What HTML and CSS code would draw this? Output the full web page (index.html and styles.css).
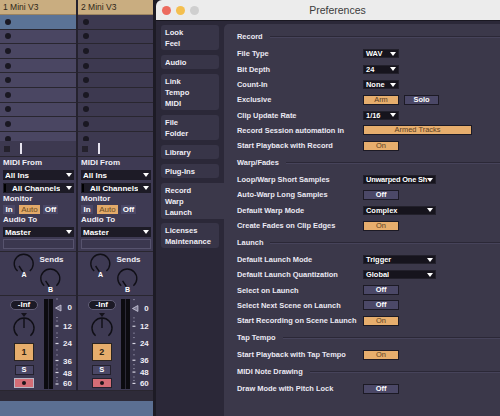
FILE: index.html
```html
<!DOCTYPE html>
<html lang="en">
<head>
    <meta charset="UTF-8">
    <meta name="viewport" content="width=device-width, initial-scale=1.0">
    <title>Preferences</title>
    <link rel="stylesheet" href="styles.css">
</head>
<body>
<div class="screen">
    <div class="left">
        <div class="tracks">
            <div class="track sel">
                <div class="track-head">1 Mini V3</div>
                <div class="slots">
                    <div class="slot active"><span class="dot"></span></div>
                    <div class="slot"><span class="dot"></span></div>
                    <div class="slot"><span class="dot"></span></div>
                    <div class="slot"><span class="dot"></span></div>
                    <div class="slot"><span class="dot"></span></div>
                    <div class="slot"><span class="dot"></span></div>
                    <div class="slot"><span class="dot"></span></div>
                    <div class="slot"><span class="dot"></span></div>
                    <div class="slot"><span class="dot"></span></div>
                </div>
                <div class="stop-row"><span class="stop"></span><span class="bar"></span></div>
                <div class="io">
                    <div class="lbl">MIDI From</div>
                    <div class="drop"><span>All Ins</span><i class="arr"></i></div>
                    <div class="drop chan"><span><b class="tick"></b>All Channels</span><i class="arr"></i></div>
                    <div class="lbl">Monitor</div>
                    <div class="mon">
                        <span class="mb m-in">In</span>
                        <span class="mb m-auto">Auto</span>
                        <span class="mb m-off">Off</span>
                    </div>
                    <div class="lbl">Audio To</div>
                    <div class="drop"><span>Master</span><i class="arr"></i></div>
                    <div class="blank"></div>
                </div>
                <div class="sends">
                    <svg width="76" height="44" viewBox="0 0 76 44">
                        <path d="M17.6 19 A9.5 9.5 0 1 1 29.8 19" class="knob"/>
                        <line x1="19" x2="22.7" y1="14" y2="19.7" class="knob"/>
                        <text x="24" y="24.5" class="kl">A</text>
                        <text x="39.5" y="10" class="kt">Sends</text>
                        <path d="M44.2 33.8 A9.5 9.5 0 1 1 56.4 33.8" class="knob"/>
                        <line x1="45.6" x2="49.3" y1="28.8" y2="34.5" class="knob"/>
                        <text x="50.5" y="39.5" class="kl">B</text>
                    </svg>
                </div>
                <div class="mixer">
                    <div class="mix-ctl">
                        <div class="pill">-Inf</div>
                        <svg class="pan" width="24" height="25" viewBox="0 0 24 25">
                            <polygon points="9,0 15,0 12,4" fill="#15131c"/>
                            <path d="M5.6 22.7 A10 10 0 1 1 18.4 22.7" class="knob"/>
                            <line x1="12" x2="12" y1="5" y2="15" class="knob"/>
                        </svg>
                        <div class="num">1</div>
                        <div class="solo">S</div>
                        <div class="rec"><i></i></div>
                    </div>
                    <div class="meter"><i></i><i></i></div>
                    <svg class="scale" width="22" height="94" viewBox="0 0 22 94">
                        <g class="minor">
                            <line x1="2" x2="4" y1="3" y2="3"/>
                            <line x1="2" x2="4" y1="21.5" y2="21.5"/>
                            <line x1="2" x2="4" y1="25" y2="25"/>
                            <line x1="2" x2="4" y1="37" y2="37"/>
                            <line x1="2" x2="4" y1="41.5" y2="41.5"/>
                            <line x1="2" x2="4" y1="54" y2="54"/>
                            <line x1="2" x2="4" y1="59" y2="59"/>
                            <line x1="2" x2="4" y1="69" y2="69"/>
                            <line x1="2" x2="4" y1="73" y2="73"/>
                            <line x1="2" x2="4" y1="81.5" y2="81.5"/>
                            <line x1="2" x2="4" y1="85" y2="85"/>
                        </g>
                        <polygon points="7,9 1.5,12 7,15" fill="#7d7a92" stroke="#cfcde0" stroke-width="0.8"/>
                        <g class="major">
                            <line x1="1.5" x2="4.5" y1="30" y2="30"/>
                            <line x1="1.5" x2="4.5" y1="47.5" y2="47.5"/>
                            <line x1="1.5" x2="4.5" y1="64.5" y2="64.5"/>
                            <line x1="1.5" x2="4.5" y1="76.5" y2="76.5"/>
                            <line x1="1.5" x2="4.5" y1="88" y2="88"/>
                        </g>
                        <text x="18" y="14.3" class="sn">0</text>
                        <text x="18" y="33" class="sn">12</text>
                        <text x="18" y="50.3" class="sn">24</text>
                        <text x="18" y="67.7" class="sn">36</text>
                        <text x="18" y="79.7" class="sn">48</text>
                        <text x="18" y="90.3" class="sn">60</text>
                    </svg>
                </div>
            </div>

            <div class="track">
                <div class="track-head">2 Mini V3</div>
                <div class="slots">
                    <div class="slot"><span class="dot"></span></div>
                    <div class="slot"><span class="dot"></span></div>
                    <div class="slot"><span class="dot"></span></div>
                    <div class="slot"><span class="dot"></span></div>
                    <div class="slot"><span class="dot"></span></div>
                    <div class="slot"><span class="dot"></span></div>
                    <div class="slot"><span class="dot"></span></div>
                    <div class="slot"><span class="dot"></span></div>
                    <div class="slot"><span class="dot"></span></div>
                </div>
                <div class="stop-row"><span class="stop"></span><span class="bar"></span></div>
                <div class="io">
                    <div class="lbl">MIDI From</div>
                    <div class="drop"><span>All Ins</span><i class="arr"></i></div>
                    <div class="drop chan"><span><b class="tick"></b>All Channels</span><i class="arr"></i></div>
                    <div class="lbl">Monitor</div>
                    <div class="mon">
                        <span class="mb m-in">In</span>
                        <span class="mb m-auto">Auto</span>
                        <span class="mb m-off">Off</span>
                    </div>
                    <div class="lbl">Audio To</div>
                    <div class="drop"><span>Master</span><i class="arr"></i></div>
                    <div class="blank"></div>
                </div>
                <div class="sends">
                    <svg width="75" height="44" viewBox="0 0 75 44">
                        <path d="M16.2 19 A9.5 9.5 0 1 1 28.4 19" class="knob"/>
                        <line x1="17.6" x2="21.3" y1="14" y2="19.7" class="knob"/>
                        <text x="22.6" y="24.5" class="kl">A</text>
                        <text x="38.5" y="10" class="kt">Sends</text>
                        <path d="M43.2 33.8 A9.5 9.5 0 1 1 55.4 33.8" class="knob"/>
                        <line x1="44.6" x2="48.3" y1="28.8" y2="34.5" class="knob"/>
                        <text x="49.5" y="39.5" class="kl">B</text>
                    </svg>
                </div>
                <div class="mixer">
                    <div class="mix-ctl">
                        <div class="pill">-Inf</div>
                        <svg class="pan" width="24" height="25" viewBox="0 0 24 25">
                            <polygon points="9,0 15,0 12,4" fill="#15131c"/>
                            <path d="M5.6 22.7 A10 10 0 1 1 18.4 22.7" class="knob"/>
                            <line x1="12" x2="12" y1="5" y2="15" class="knob"/>
                        </svg>
                        <div class="num">2</div>
                        <div class="solo">S</div>
                        <div class="rec"><i></i></div>
                    </div>
                    <div class="meter"><i></i><i></i></div>
                    <svg class="scale" width="22" height="94" viewBox="0 0 22 94">
                        <g class="minor">
                            <line x1="2" x2="4" y1="3" y2="3"/>
                            <line x1="2" x2="4" y1="21.5" y2="21.5"/>
                            <line x1="2" x2="4" y1="25" y2="25"/>
                            <line x1="2" x2="4" y1="37" y2="37"/>
                            <line x1="2" x2="4" y1="41.5" y2="41.5"/>
                            <line x1="2" x2="4" y1="54" y2="54"/>
                            <line x1="2" x2="4" y1="59" y2="59"/>
                            <line x1="2" x2="4" y1="69" y2="69"/>
                            <line x1="2" x2="4" y1="73" y2="73"/>
                            <line x1="2" x2="4" y1="81.5" y2="81.5"/>
                            <line x1="2" x2="4" y1="85" y2="85"/>
                        </g>
                        <polygon points="7,9 1.5,12 7,15" fill="#7d7a92" stroke="#cfcde0" stroke-width="0.8"/>
                        <g class="major">
                            <line x1="1.5" x2="4.5" y1="30" y2="30"/>
                            <line x1="1.5" x2="4.5" y1="47.5" y2="47.5"/>
                            <line x1="1.5" x2="4.5" y1="64.5" y2="64.5"/>
                            <line x1="1.5" x2="4.5" y1="76.5" y2="76.5"/>
                            <line x1="1.5" x2="4.5" y1="88" y2="88"/>
                        </g>
                        <text x="18" y="14.3" class="sn">0</text>
                        <text x="18" y="33" class="sn">12</text>
                        <text x="18" y="50.3" class="sn">24</text>
                        <text x="18" y="67.7" class="sn">36</text>
                        <text x="18" y="79.7" class="sn">48</text>
                        <text x="18" y="90.3" class="sn">60</text>
                    </svg>
                </div>
            </div>
        </div>
        <div class="left-strip"></div>
        <div class="left-blue"></div>
    </div>

    <div class="window">
        <div class="titlebar">
            <div class="lights">
                <span class="light red"></span>
                <span class="light yellow"></span>
                <span class="light grey"></span>
            </div>
            <div class="title">Preferences</div>
            <div></div>
        </div>
        <div class="win-body">
            <nav class="sidebar">
                <div class="tab">Look<br>Feel</div>
                <div class="tab">Audio</div>
                <div class="tab">Link<br>Tempo<br>MIDI</div>
                <div class="tab">File<br>Folder</div>
                <div class="tab">Library</div>
                <div class="tab">Plug-Ins</div>
                <div class="tab cur">Record<br>Warp<br>Launch</div>
                <div class="tab">Licenses<br>Maintenance</div>
            </nav>

            <main class="panel">
                <div class="sec-head"><span>Record</span></div>
                <div class="row"><span class="name">File Type</span><span class="dd"><span>WAV</span><i class="arr"></i></span></div>
                <div class="row"><span class="name">Bit Depth</span><span class="dd"><span>24</span><i class="arr"></i></span></div>
                <div class="row"><span class="name">Count-In</span><span class="dd"><span>None</span><i class="arr"></i></span></div>
                <div class="row"><span class="name">Exclusive</span><span class="tg on">Arm</span><span class="tg solo-btn">Solo</span></div>
                <div class="row"><span class="name">Clip Update Rate</span><span class="dd"><span>1/16</span><i class="arr"></i></span></div>
                <div class="row"><span class="name">Record Session automation in</span><span class="tg on armed">Armed Tracks</span></div>
                <div class="row"><span class="name">Start Playback with Record</span><span class="tg on">On</span></div>

                <div class="sec-head"><span>Warp/Fades</span></div>
                <div class="row"><span class="name">Loop/Warp Short Samples</span><span class="dd wide"><span class="tight">Unwarped One Sh</span><i class="arr"></i></span></div>
                <div class="row"><span class="name">Auto-Warp Long Samples</span><span class="tg">Off</span></div>
                <div class="row"><span class="name">Default Warp Mode</span><span class="dd wide"><span>Complex</span><i class="arr"></i></span></div>
                <div class="row"><span class="name">Create Fades on Clip Edges</span><span class="tg on">On</span></div>

                <div class="sec-head"><span>Launch</span></div>
                <div class="row"><span class="name">Default Launch Mode</span><span class="dd wide"><span>Trigger</span><i class="arr"></i></span></div>
                <div class="row"><span class="name">Default Launch Quantization</span><span class="dd wide"><span>Global</span><i class="arr"></i></span></div>
                <div class="row"><span class="name">Select on Launch</span><span class="tg">Off</span></div>
                <div class="row"><span class="name">Select Next Scene on Launch</span><span class="tg">Off</span></div>
                <div class="row"><span class="name">Start Recording on Scene Launch</span><span class="tg on">On</span></div>

                <div class="sec-head"><span>Tap Tempo</span></div>
                <div class="row"><span class="name">Start Playback with Tap Tempo</span><span class="tg on">On</span></div>

                <div class="sec-head"><span>MIDI Note Drawing</span></div>
                <div class="row"><span class="name">Draw Mode with Pitch Lock</span><span class="tg">Off</span></div>
            </main>
        </div>
    </div>
</div>
</body>
</html>
```

FILE: styles.css
```css
* {
    box-sizing: border-box;
}
body {
    margin: 0;
    width: 500px;
    height: 416px;
    overflow: hidden;
    background: #1d1b25;
    font-family: "Liberation Sans", Arial, sans-serif;
}
.screen {
    display: flex;
    width: 500px;
    height: 416px;
    overflow: hidden;
}

/* tracks on the left */
.left {
    flex: none;
    width: 153px;
    display: flex;
    flex-direction: column;
}
.tracks {
    display: flex;
    gap: 2px;
    background: #25222e;
}
.track {
    width: 76px;
    background: #3e3a53;
    display: flex;
    flex-direction: column;
}
.track + .track {
    width: 75px;
}
.track-head {
    height: 15px;
    line-height: 15px;
    padding-left: 3px;
    background: #c9ad80;
    border-bottom: 1px solid #9c8460;
    color: #2e2618;
    font-size: 8.5px;
}
.slots {
    height: 126px;
    overflow: hidden;
}
.slot {
    height: 14.6px;
    display: flex;
    align-items: center;
    padding-left: 5px;
    background: #3d3950;
    border-bottom: 1px solid #29262f;
}
.track.sel .slot {
    background: #4a4662;
}
.track.sel .slot.active {
    background: #5b7396;
}
.dot {
    width: 6px;
    height: 6px;
    border-radius: 50%;
    background: #1a1822;
}
.stop-row {
    height: 16px;
    display: flex;
    align-items: center;
    padding-left: 4px;
    gap: 10px;
    background: #3d3950;
    border-bottom: 1px solid #29262f;
}
.stop {
    width: 6px;
    height: 6px;
    background: #24212c;
}
.bar {
    width: 1.5px;
    height: 11px;
    background: #e6e4ee;
}
.io {
    height: 95px;
    padding: 1px 2px 0 3px;
    border-bottom: 1px solid #29262f;
}
.lbl {
    height: 10px;
    line-height: 10px;
    margin-top: 1px;
    font-size: 8px;
    font-weight: bold;
    color: #f0eef6;
}
.io .lbl:first-child {
    margin-top: 0;
}
.drop {
    height: 10px;
    margin-top: 2px;
    padding: 0 2px 0 2px;
    display: flex;
    align-items: center;
    justify-content: space-between;
    background: #1d1b26;
    color: #fff;
    font-size: 8px;
    font-weight: bold;
}
.drop.chan {
    margin-top: 3px;
    padding-left: 1px;
}
.drop span {
    display: flex;
    align-items: center;
    white-space: nowrap;
    overflow: hidden;
}
.tick {
    width: 2px;
    height: 8px;
    margin-right: 6px;
    background: #000;
}
.arr {
    flex: none;
    width: 0;
    height: 0;
    border-left: 3px solid transparent;
    border-right: 3px solid transparent;
    border-top: 4px solid #fff;
}
.mon {
    display: flex;
    margin-top: 1px;
    height: 9px;
}
.mb {
    height: 9px;
    line-height: 9px;
    font-size: 8px;
    font-weight: bold;
    text-align: center;
    background: #4b4867;
    color: #fff;
}
.m-in { width: 12px; }
.m-auto {
    width: 21px;
    margin-left: 4px;
    background: #e3aa69;
    color: #6b4a22;
    font-weight: normal;
}
.m-off {
    width: 15px;
    margin-left: 3px;
}
.blank {
    height: 10px;
    margin-top: 2px;
    border: 1px solid #57536e;
    background: #3b374f;
}
.sends {
    height: 44px;
    border-bottom: 1px solid #29262f;
}
.sends svg {
    display: block;
}
.knob {
    fill: none;
    stroke: #100f16;
    stroke-width: 1.4;
}
.kl {
    font: bold 7px "Liberation Sans", Arial, sans-serif;
    fill: #fff;
    text-anchor: middle;
}
.kt {
    font: bold 8px "Liberation Sans", Arial, sans-serif;
    fill: #f0eef6;
}
.mixer {
    height: 95px;
    display: flex;
    border-bottom: 1px solid #29262f;
}
.mix-ctl {
    width: 44px;
    padding-left: 4px;
    display: flex;
    flex-direction: column;
    align-items: center;
}
.pill {
    width: 28px;
    height: 10px;
    margin-top: 4px;
    border-radius: 5px;
    border: 1px solid #625e78;
    background: #1b1925;
    color: #fff;
    font-size: 8px;
    font-weight: bold;
    line-height: 8px;
    text-align: center;
}
.pan {
    display: block;
    margin-top: 3px;
}
.num {
    width: 20px;
    height: 18px;
    margin-top: 5px;
    border: 1px solid #2a2420;
    background: #e6ad6c;
    color: #2d2314;
    font-size: 9px;
    font-weight: bold;
    line-height: 16px;
    text-align: center;
}
.solo {
    width: 19px;
    height: 10px;
    margin-top: 4px;
    border: 1px solid #24212d;
    background: #4b4867;
    color: #fff;
    font-size: 7.5px;
    font-weight: bold;
    line-height: 8px;
    text-align: center;
}
.rec {
    width: 20px;
    height: 10px;
    margin-top: 3px;
    border: 1px solid #24212d;
    background: #d46d76;
    display: flex;
    align-items: center;
    justify-content: center;
}
.track.sel .rec {
    border-color: #b9b6c4;
}
.rec i {
    width: 4px;
    height: 4px;
    border-radius: 50%;
    background: #1a1418;
}
.meter {
    width: 9px;
    height: 90px;
    margin-top: 3px;
    display: flex;
    gap: 1px;
    background: #2c2a38;
}
.meter i {
    flex: 1;
    background: #0c0b10;
}
.scale {
    display: block;
    margin-left: 1px;
}
.minor line {
    stroke: #8f8ca3;
    stroke-width: 0.8;
}
.major line {
    stroke: #d8d6e3;
    stroke-width: 1.2;
}
.sn {
    font: bold 8px "Liberation Sans", Arial, sans-serif;
    fill: #f0eef6;
    text-anchor: end;
}
.left-strip {
    height: 10px;
    background: #2e2b39;
}
.left-blue {
    flex: 1;
    background: #5b6f92;
}

/* preferences window */
.window {
    flex: none;
    width: 363px;
    margin-left: 3px;
    display: flex;
    flex-direction: column;
    background: #2b2838;
    border-radius: 6px 0 0 0;
    overflow: hidden;
}
.titlebar {
    height: 21px;
    display: grid;
    grid-template-columns: 1fr auto 1fr;
    align-items: center;
    background: #ececec;
    border-bottom: 1px solid #1a1822;
}
.lights {
    display: flex;
    gap: 5px;
    padding-left: 6px;
}
.light {
    width: 9px;
    height: 9px;
    border-radius: 50%;
}
.red { background: #ec6a5e; }
.yellow { background: #f4bf4f; }
.grey { background: #cfcfcf; }
.title {
    font-size: 10.5px;
    color: #3b3b3b;
}
.win-body {
    flex: 1;
    display: flex;
}
.sidebar {
    flex: none;
    width: 68px;
    padding: 4px 0 0 5px;
}
.tab {
    width: 58px;
    margin-bottom: 5px;
    padding: 1.5px 0 1.5px 4px;
    line-height: 11px;
    border-radius: 3px;
    background: #383548;
    color: #f0eef6;
    font-size: 7.6px;
    font-weight: bold;
}
.tab.cur {
    width: 63px;
    margin-bottom: 4px;
    background: #3b384a;
    border-radius: 3px 0 0 3px;
}
.panel {
    flex: 1;
    margin-top: 3px;
    padding: 3.6px 0 0 13px;
    background: #3b384a;
    border-radius: 5px 0 0 0;
    color: #ebe9f3;
    font-size: 7.45px;
    font-weight: bold;
}
.sec-head {
    height: 18.7px;
    display: flex;
    align-items: center;
    gap: 7px;
}
.sec-head::after {
    content: "";
    flex: 1;
    border-top: 1px solid #2b2837;
    border-bottom: 1px solid #46435a;
}
.row {
    height: 15.3px;
    display: flex;
    align-items: center;
}
.name {
    width: 126px;
    flex: none;
    white-space: nowrap;
}
.dd {
    width: 36px;
    height: 9px;
    padding: 0 2px 0 2px;
    display: flex;
    align-items: center;
    justify-content: space-between;
    background: #16141d;
    border: 1px solid #22202b;
    color: #fff;
}
.dd.wide {
    width: 73px;
}
.dd span {
    white-space: nowrap;
}
.dd .tight {
    letter-spacing: -0.2px;
}
.tg {
    width: 36px;
    height: 10px;
    line-height: 8px;
    text-align: center;
    background: #4b4867;
    border: 1px solid #1c1a25;
    color: #fff;
}
.tg.on {
    background: #e7ae6d;
    color: #5a4024;
    font-weight: normal;
}
.tg.solo-btn {
    width: 35px;
    margin-left: 5px;
}
.tg.armed {
    width: 109px;
}
```
